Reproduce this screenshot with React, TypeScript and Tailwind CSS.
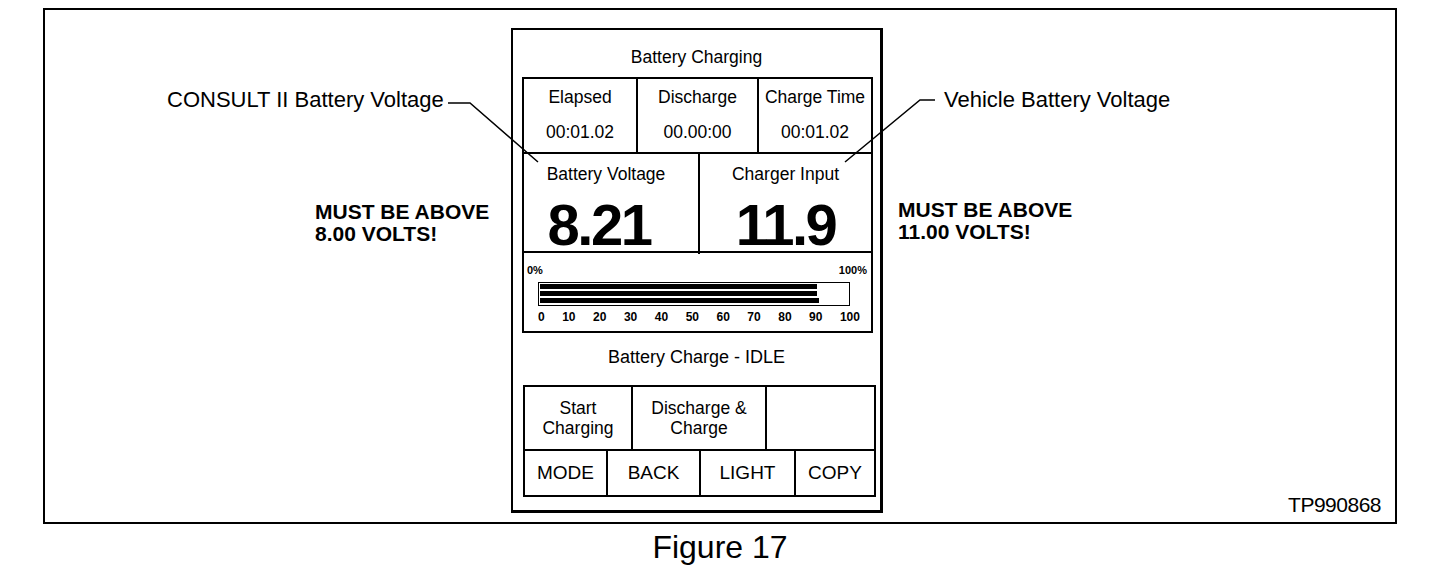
import React from 'react';

const ticks = ['0', '10', '20', '30', '40', '50', '60', '70', '80', '90', '100'];

function StatCell({ label, value, className }: { label: string; value: string; className?: string }) {
  return (
    <div className={`flex flex-col items-center ${className ?? ''}`}>
      <div className="pt-[8px] text-[17.5px] leading-[20px]">{label}</div>
      <div className="mt-[15px] text-[17.5px] leading-[20px]">{value}</div>
    </div>
  );
}

function ReadingCell({ label, value, className, labelClass, valueClass }: {
  label: string;
  value: string;
  className?: string;
  labelClass?: string;
  valueClass?: string;
}) {
  return (
    <div className={`flex flex-col items-center ${className ?? ''}`}>
      <div className={`pt-[10px] text-[17.5px] leading-[20px] ${labelClass ?? ''}`}>{label}</div>
      <div className={`mt-[12px] text-[58px] leading-[58px] font-bold tracking-[-2.5px] ${valueClass ?? ''}`}>{value}</div>
    </div>
  );
}

function ChargeBar() {
  return (
    <div className="h-[78px] flex flex-col">
      <div className="flex justify-between pl-[3px] pr-[4px] pt-[11px] text-[11px] leading-[12px] font-bold">
        <span>0%</span>
        <span>100%</span>
      </div>
      <div className="ml-[14px] mt-[6px] w-[312px] h-[24px] border-[1.5px] border-black p-[1px] flex flex-col gap-[2px]">
        <div className="h-[5px] w-[277px] bg-black" />
        <div className="h-[5px] w-[277px] bg-black" />
        <div className="h-[5px] w-[279px] bg-black" />
      </div>
      <div className="ml-[14px] mt-[5px] w-[322px] flex justify-between text-[12px] leading-[12px] font-bold">
        {ticks.map(t => (
          <span key={t}>{t}</span>
        ))}
      </div>
    </div>
  );
}

function Device() {
  return (
    <div className="w-[372px] h-[485px] border-2 border-r-[3px] border-b-[3px] border-black flex flex-col">
      <div className="h-[47px] pt-[17px] text-center text-[17.5px] leading-[20px]">Battery Charging</div>

      {/* readings */}
      <div className="ml-[9px] w-[351px] border-2 border-black flex flex-col">
        <div className="h-[75px] grid grid-cols-[114px_121px_1fr] border-b-2 border-black">
          <StatCell label="Elapsed" value="00:01.02" className="border-r-2 border-black" />
          <StatCell label="Discharge" value="00.00:00" className="border-r-2 border-black" />
          <StatCell label="Charge Time" value="00:01.02" />
        </div>
        <div className="h-[99px] grid grid-cols-[176px_1fr] border-b-2 border-black">
          <ReadingCell
            label="Battery Voltage"
            value="8.21"
            className="border-r-2 border-black"
            labelClass="mr-[10px]"
            valueClass="mr-[24px]"
          />
          <ReadingCell label="Charger Input" value="11.9" />
        </div>
        <ChargeBar />
      </div>

      <div className="h-[52px] pt-[14px] text-center text-[18px] leading-[20px]">Battery Charge - IDLE</div>

      {/* soft keys */}
      <div className="ml-[10px] w-[353px] border-2 border-black flex flex-col">
        <div className="h-[64px] grid grid-cols-[108px_134px_1fr] border-b-2 border-black text-[17.5px] leading-[20px] text-center">
          <div className="border-r-2 border-black flex items-center justify-center">Start<br />Charging</div>
          <div className="border-r-2 border-black flex items-center justify-center">Discharge &amp;<br />Charge</div>
          <div />
        </div>
        <div className="h-[44px] grid grid-cols-[83px_93px_95px_1fr] text-[19px] leading-[20px] text-center">
          <div className="border-r-2 border-black flex items-center justify-center">MODE</div>
          <div className="border-r-2 border-black flex items-center justify-center">BACK</div>
          <div className="border-r-2 border-black flex items-center justify-center">LIGHT</div>
          <div className="flex items-center justify-center">COPY</div>
        </div>
      </div>
    </div>
  );
}

export default function App() {
  return (
    <div className="relative w-[1456px] h-[576px] bg-white text-black font-['Liberation_Sans',Arial,sans-serif]">
      <div className="pl-[43px] pt-[8px] flex flex-col items-start">
        <div className="w-[1354px] h-[516px] border-2 border-black flex">
          {/* left notes */}
          <div className="w-[466px] flex flex-col">
            <div className="ml-[122px] pt-[78px] text-[22px] leading-[24px]">CONSULT II Battery Voltage</div>
            <div className="ml-[270px] mt-[89px] text-[21px] leading-[22px] font-bold">
              MUST BE ABOVE<br />8.00 VOLTS!
            </div>
          </div>

          <div className="pt-[18px]">
            <Device />
          </div>

          {/* right notes */}
          <div className="flex-1 flex flex-col">
            <div className="ml-[61px] pt-[78px] text-[22px] leading-[24px]">Vehicle Battery Voltage</div>
            <div className="ml-[15px] mt-[87px] text-[21px] leading-[22px] font-bold">
              MUST BE ABOVE<br />11.00 VOLTS!
            </div>
            <div className="mt-auto self-end pr-[14px] pb-[7px] text-[21px] leading-[20px] tracking-[-0.5px]">TP990868</div>
          </div>
        </div>
        <div className="w-[1354px] mt-[5px] text-center text-[32px] leading-[36px]">Figure 17</div>
      </div>

      {/* leader lines */}
      <svg className="absolute left-0 top-0 pointer-events-none" width="1456" height="576" fill="none" stroke="black" strokeWidth="1.5">
        <path d="M448 103 H470 L538 162" />
        <path d="M935 100 H920 L845 162" />
      </svg>
    </div>
  );
}
